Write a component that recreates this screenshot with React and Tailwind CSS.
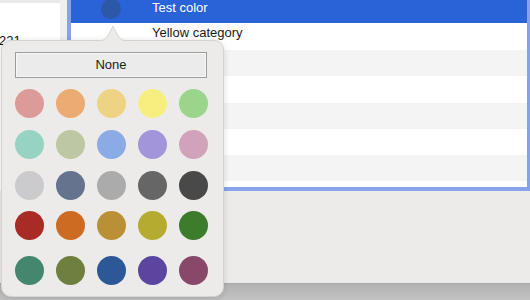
import React from 'react';

const SWATCHES = [
  ['#dc9b99', '#ecab72', '#edd383', '#f6ef80', '#9bd58b'],
  ['#97d3c2', '#bdc7a3', '#8babe6', '#a395d9', '#d1a3bb'],
  ['#cbcbcd', '#66738f', '#ababab', '#666666', '#494949'],
  ['#a92b25', '#ce6b23', '#ba9037', '#b4ab30', '#3d7b2d'],
  ['#45876e', '#6f7f3f', '#2d5898', '#5b459f', '#87486a'],
];

const ROWS = [
  { h: 'h-[27px]', bg: 'bg-white', label: 'Yellow category' },
  { h: 'h-[26px]', bg: 'bg-[#f4f4f4]' },
  { h: 'h-[27px]', bg: 'bg-white' },
  { h: 'h-[26px]', bg: 'bg-[#f4f4f4]' },
  { h: 'h-[26px]', bg: 'bg-white' },
  { h: 'h-[26px]', bg: 'bg-[#f4f4f4]' },
];

function Swatch({ color }) {
  return <div className="w-[29px] h-[29px] rounded-full" style={{ backgroundColor: color }} />;
}

export default function App() {
  return (
    <div
      className="relative w-[530px] h-[300px] overflow-hidden bg-[#ecebe9] flex flex-col text-[13px] leading-4"
      style={{ fontFamily: '"Liberation Sans", Arial, sans-serif' }}
    >
      {/* window content */}
      <div className="h-[283px] flex items-start">
        <div className="w-[60px] h-[191px] bg-white border-t-[3px] border-[#e9e9e9] pt-[30px] text-[#111]">
          <span className="-ml-px">221</span>
        </div>
        <div className="w-[7px] h-[191px] bg-[#efefef]" />

        {/* table with focus ring */}
        <div className="flex-1 h-[191px] border-l-[4px] border-r-[3px] border-b-[4px] border-[#86a2ea] bg-white flex flex-col">
          <div className="h-[23px] bg-[#2a63d8] flex items-start text-white">
            <div className="w-[20px] h-[20px] rounded-full bg-[#2d58a5] ml-[30px] -mt-px" />
            <span className="ml-[31px]">Test color</span>
          </div>
          {ROWS.map((r, i) => (
            <div key={i} className={`${r.h} ${r.bg} pl-[81px] pt-[2px] text-[#1a1a1a]`}>
              {r.label}
            </div>
          ))}
          <div className="flex-1 bg-white" />
        </div>
      </div>

      {/* desktop strip under the window */}
      <div className="flex-1 border-t border-[#a9a9a9] bg-gradient-to-b from-[#b2b2b2] to-[#c2c2c2]" />

      {/* color popover */}
      <div className="absolute left-[1px] top-[40px] w-[223px] h-[257px] rounded-[10px] bg-[#ecebea] border border-[#d4d3d2] shadow-[0_1px_6px_rgba(0,0,0,0.14)] px-[13px] pt-[11px]">
        <svg className="absolute left-[93px] -top-[17px]" width="36" height="18" viewBox="0 0 36 18">
          <path d="M0 17.5 C8 17.5 11 15 14 10 L18 2 L22 10 C25 15 28 17.5 36 17.5" fill="#ecebea" stroke="#d4d3d2" strokeWidth="1" />
          <rect x="0" y="17" width="36" height="2" fill="#ecebea" />
        </svg>
        <div className="h-[26px] w-[192px] border border-[#9c9c9c] bg-[#ebebeb] shadow-[inset_0_0_0_1px_#f7f7f7] flex items-center justify-center text-[#1c1c1c]">
          None
        </div>
        <div className="mt-[11px] flex flex-col gap-[12px]">
          {SWATCHES.map((row, i) => (
            <div key={i} className={`flex gap-[12px] ${i === 4 ? 'mt-[4px]' : ''} ${i === 3 ? '-mt-px' : ''}`}>
              {row.map((c) => (
                <Swatch key={c} color={c} />
              ))}
            </div>
          ))}
        </div>
      </div>
    </div>
  );
}
